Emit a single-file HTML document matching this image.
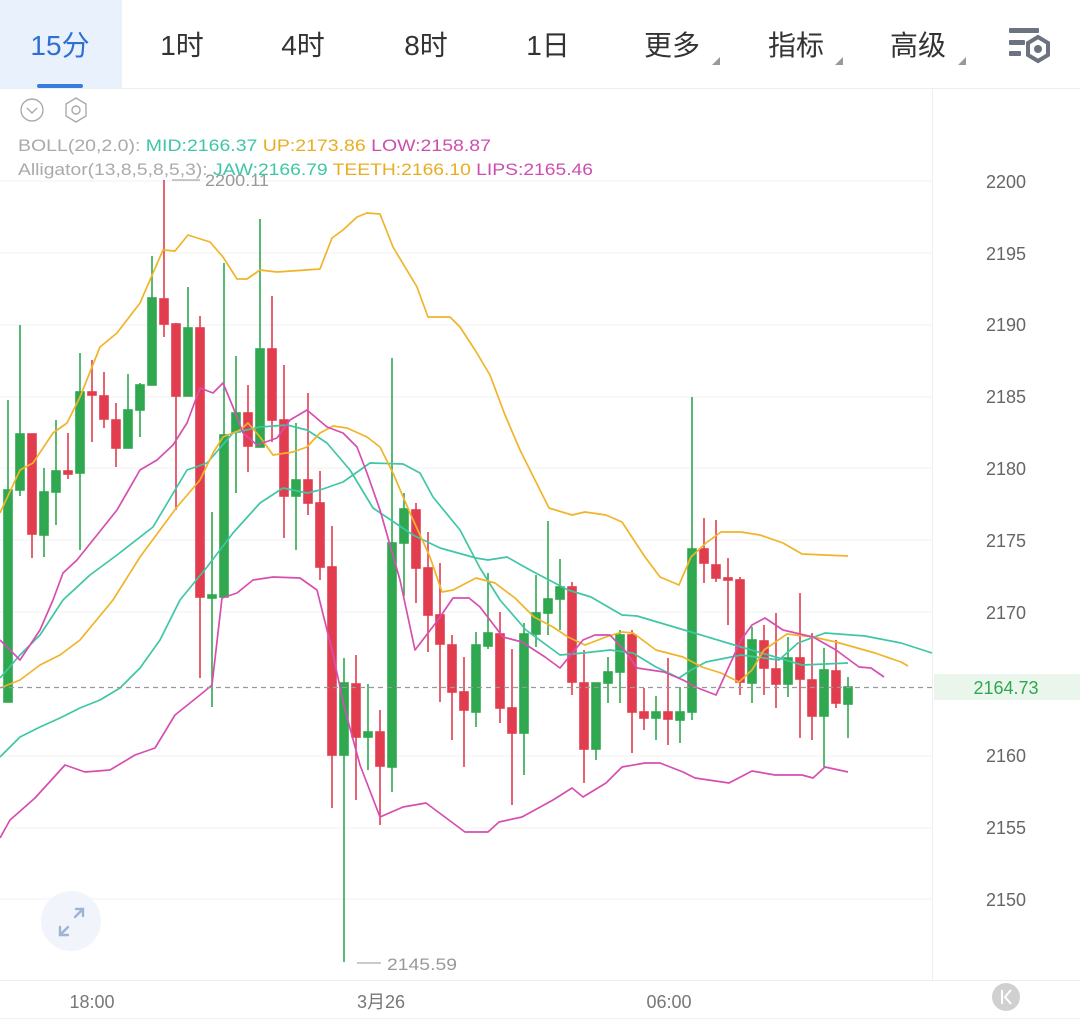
<!DOCTYPE html>
<html><head><meta charset="utf-8"><style>
html,body{margin:0;padding:0;background:#fff;}
svg{display:block;}
text{font-family:"Liberation Sans","Noto Sans CJK SC",sans-serif;}
</style></head><body>
<svg width="1080" height="1022" viewBox="0 0 1080 1022" xmlns="http://www.w3.org/2000/svg">
<rect width="1080" height="1022" fill="#fff"/>
<!-- tabs -->
<rect x="0" y="0" width="122" height="88" fill="#e8f1fc"/>
<rect x="37" y="84" width="46" height="4" rx="2" fill="#3a7be0"/>
<g font-size="28" fill="#333">
<text x="60" y="55" text-anchor="middle" fill="#2f6fd4">15分</text>
<text x="182" y="55" text-anchor="middle">1时</text>
<text x="303" y="55" text-anchor="middle">4时</text>
<text x="426" y="55" text-anchor="middle">8时</text>
<text x="548" y="55" text-anchor="middle">1日</text>
<text x="672" y="55" text-anchor="middle">更多</text>
<text x="796" y="55" text-anchor="middle">指标</text>
<text x="918" y="55" text-anchor="middle">高级</text>
</g>
<g fill="#999">
<polygon points="712,65 720,57 720,65"/>
<polygon points="835,65 843,57 843,65"/>
<polygon points="958,65 966,57 966,65"/>
</g>
<g fill="#6b7280">
<rect x="1009" y="28" width="30" height="5" rx="1"/>
<rect x="1009" y="40" width="16" height="5" rx="1"/>
<rect x="1009" y="51" width="12" height="5" rx="1"/>
<polygon points="1038,37 1048,43 1048,55 1038,61 1028,55 1028,43" fill="none" stroke="#6b7280" stroke-width="4"/>
<circle cx="1038" cy="49" r="4"/>
</g>
<line x1="0" y1="88.5" x2="1080" y2="88.5" stroke="#eee"/>
<!-- grid -->
<g stroke="#f1f1f1" stroke-width="1">
<line x1="0" y1="181" x2="932" y2="181"/><line x1="0" y1="253" x2="932" y2="253"/>
<line x1="0" y1="325" x2="932" y2="325"/><line x1="0" y1="397" x2="932" y2="397"/>
<line x1="0" y1="468" x2="932" y2="468"/><line x1="0" y1="540" x2="932" y2="540"/>
<line x1="0" y1="612" x2="932" y2="612"/><line x1="0" y1="756" x2="932" y2="756"/>
<line x1="0" y1="828" x2="932" y2="828"/><line x1="0" y1="899" x2="932" y2="899"/>
</g>
<line x1="932.5" y1="88" x2="932.5" y2="980" stroke="#eee"/>
<line x1="0" y1="980.5" x2="1080" y2="980.5" stroke="#eee"/>
<line x1="0" y1="1018.5" x2="1080" y2="1018.5" stroke="#f2f2f2"/>
<!-- legend icons -->
<circle cx="32" cy="110" r="11" fill="none" stroke="#aaa" stroke-width="1.4"/>
<polyline points="27,108 32,113 37,108" fill="none" stroke="#aaa" stroke-width="1.4"/>
<polygon points="76,98 86,104 86,116 76,122 66,116 66,104" fill="none" stroke="#aaa" stroke-width="1.4"/>
<circle cx="76" cy="110" r="4" fill="none" stroke="#aaa" stroke-width="1.4"/>
<!-- price axis -->
<g font-size="18" fill="#666" text-anchor="middle">
<text x="1006" y="188">2200</text><text x="1006" y="260">2195</text>
<text x="1006" y="331">2190</text><text x="1006" y="403">2185</text>
<text x="1006" y="475">2180</text><text x="1006" y="547">2175</text>
<text x="1006" y="619">2170</text><text x="1006" y="762">2160</text>
<text x="1006" y="834">2155</text><text x="1006" y="906">2150</text>
</g>
<!-- time axis -->
<g font-size="18" fill="#777" text-anchor="middle">
<text x="92" y="1008">18:00</text><text x="381" y="1008">3月26</text><text x="669" y="1008">06:00</text>
</g>
<circle cx="1006" cy="997" r="14" fill="#d0d0d0"/>
<line x1="1002" y1="990" x2="1002" y2="1004" stroke="#fff" stroke-width="2"/>
<polyline points="1011,990 1005,997 1011,1004" fill="none" stroke="#fff" stroke-width="2"/>
<!-- candles -->
<g stroke-width="1.6">
<g stroke="#2fa84f" fill="#2fa84f">
<line x1="8" y1="400" x2="8" y2="702"/><rect x="4" y="490" width="8" height="212"/>
<line x1="20" y1="325" x2="20" y2="496"/><rect x="16" y="434" width="8" height="56"/>
<line x1="44" y1="468" x2="44" y2="557"/><rect x="40" y="492" width="8" height="43"/>
<line x1="56" y1="420" x2="56" y2="525"/><rect x="52" y="471" width="8" height="21"/>
<line x1="80" y1="353" x2="80" y2="550"/><rect x="76" y="392" width="8" height="81"/>
<line x1="128" y1="374" x2="128" y2="448"/><rect x="124" y="410" width="8" height="38"/>
<line x1="140" y1="383" x2="140" y2="437"/><rect x="136" y="385" width="8" height="25"/>
<line x1="152" y1="256" x2="152" y2="385"/><rect x="148" y="298" width="8" height="87"/>
<line x1="188" y1="287" x2="188" y2="396"/><rect x="184" y="328" width="8" height="68"/>
<line x1="212" y1="512" x2="212" y2="707"/><rect x="208" y="595" width="8" height="3"/>
<line x1="224" y1="263" x2="224" y2="597"/><rect x="220" y="435" width="8" height="162"/>
<line x1="236" y1="356" x2="236" y2="493"/><rect x="232" y="413" width="8" height="19"/>
<line x1="260" y1="219" x2="260" y2="447"/><rect x="256" y="349" width="8" height="98"/>
<line x1="296" y1="423" x2="296" y2="550"/><rect x="292" y="480" width="8" height="16"/>
<line x1="344" y1="658" x2="344" y2="962"/><rect x="340" y="683" width="8" height="72"/>
<line x1="368" y1="684" x2="368" y2="770"/><rect x="364" y="732" width="8" height="5"/>
<line x1="392" y1="358" x2="392" y2="792"/><rect x="388" y="543" width="8" height="224"/>
<line x1="404" y1="493" x2="404" y2="596"/><rect x="400" y="509" width="8" height="34"/>
<line x1="476" y1="632" x2="476" y2="727"/><rect x="472" y="645" width="8" height="67"/>
<line x1="488" y1="573" x2="488" y2="649"/><rect x="484" y="633" width="8" height="13"/>
<line x1="524" y1="623" x2="524" y2="775"/><rect x="520" y="634" width="8" height="99"/>
<line x1="536" y1="575" x2="536" y2="647"/><rect x="532" y="613" width="8" height="21"/>
<line x1="548" y1="521" x2="548" y2="635"/><rect x="544" y="599" width="8" height="14"/>
<line x1="560" y1="559" x2="560" y2="630"/><rect x="556" y="587" width="8" height="12"/>
<line x1="596" y1="683" x2="596" y2="760"/><rect x="592" y="683" width="8" height="66"/>
<line x1="608" y1="657" x2="608" y2="703"/><rect x="604" y="672" width="8" height="11"/>
<line x1="620" y1="630" x2="620" y2="703"/><rect x="616" y="635" width="8" height="37"/>
<line x1="656" y1="696" x2="656" y2="740"/><rect x="652" y="712" width="8" height="6"/>
<line x1="680" y1="687" x2="680" y2="743"/><rect x="676" y="712" width="8" height="8"/>
<line x1="692" y1="397" x2="692" y2="720"/><rect x="688" y="549" width="8" height="163"/>
<line x1="752" y1="627" x2="752" y2="703"/><rect x="748" y="640" width="8" height="43"/>
<line x1="788" y1="637" x2="788" y2="697"/><rect x="784" y="658" width="8" height="26"/>
<line x1="824" y1="648" x2="824" y2="767"/><rect x="820" y="670" width="8" height="46"/>
<line x1="848" y1="677" x2="848" y2="738"/><rect x="844" y="687" width="8" height="17"/>
</g>
<g stroke="#e23d4e" fill="#e23d4e">
<line x1="32" y1="434" x2="32" y2="558"/><rect x="28" y="434" width="8" height="100"/>
<line x1="68" y1="433" x2="68" y2="479"/><rect x="64" y="471" width="8" height="3"/>
<line x1="92" y1="360" x2="92" y2="442"/><rect x="88" y="392" width="8" height="3"/>
<line x1="104" y1="372" x2="104" y2="428"/><rect x="100" y="396" width="8" height="23"/>
<line x1="116" y1="403" x2="116" y2="467"/><rect x="112" y="420" width="8" height="28"/>
<line x1="164" y1="180" x2="164" y2="337"/><rect x="160" y="299" width="8" height="25"/>
<line x1="176" y1="323" x2="176" y2="510"/><rect x="172" y="324" width="8" height="72"/>
<line x1="200" y1="316" x2="200" y2="678"/><rect x="196" y="328" width="8" height="269"/>
<line x1="248" y1="385" x2="248" y2="472"/><rect x="244" y="413" width="8" height="33"/>
<line x1="272" y1="296" x2="272" y2="442"/><rect x="268" y="349" width="8" height="71"/>
<line x1="284" y1="365" x2="284" y2="538"/><rect x="280" y="420" width="8" height="76"/>
<line x1="308" y1="393" x2="308" y2="515"/><rect x="304" y="480" width="8" height="23"/>
<line x1="320" y1="471" x2="320" y2="580"/><rect x="316" y="503" width="8" height="64"/>
<line x1="332" y1="526" x2="332" y2="808"/><rect x="328" y="567" width="8" height="188"/>
<line x1="356" y1="655" x2="356" y2="800"/><rect x="352" y="684" width="8" height="53"/>
<line x1="380" y1="710" x2="380" y2="825"/><rect x="376" y="732" width="8" height="34"/>
<line x1="416" y1="503" x2="416" y2="603"/><rect x="412" y="510" width="8" height="58"/>
<line x1="428" y1="532" x2="428" y2="652"/><rect x="424" y="568" width="8" height="47"/>
<line x1="440" y1="563" x2="440" y2="702"/><rect x="436" y="615" width="8" height="29"/>
<line x1="452" y1="635" x2="452" y2="740"/><rect x="448" y="645" width="8" height="47"/>
<line x1="464" y1="657" x2="464" y2="767"/><rect x="460" y="692" width="8" height="18"/>
<line x1="500" y1="612" x2="500" y2="723"/><rect x="496" y="634" width="8" height="74"/>
<line x1="512" y1="649" x2="512" y2="805"/><rect x="508" y="708" width="8" height="25"/>
<line x1="572" y1="582" x2="572" y2="695"/><rect x="568" y="587" width="8" height="95"/>
<line x1="584" y1="650" x2="584" y2="783"/><rect x="580" y="683" width="8" height="66"/>
<line x1="632" y1="630" x2="632" y2="753"/><rect x="628" y="635" width="8" height="77"/>
<line x1="644" y1="688" x2="644" y2="730"/><rect x="640" y="712" width="8" height="6"/>
<line x1="668" y1="658" x2="668" y2="745"/><rect x="664" y="712" width="8" height="7"/>
<line x1="704" y1="518" x2="704" y2="583"/><rect x="700" y="549" width="8" height="14"/>
<line x1="716" y1="520" x2="716" y2="582"/><rect x="712" y="565" width="8" height="13"/>
<line x1="728" y1="558" x2="728" y2="625"/><rect x="724" y="578" width="8" height="2"/>
<line x1="740" y1="577" x2="740" y2="695"/><rect x="736" y="580" width="8" height="102"/>
<line x1="764" y1="625" x2="764" y2="695"/><rect x="760" y="641" width="8" height="27"/>
<line x1="776" y1="613" x2="776" y2="708"/><rect x="772" y="669" width="8" height="15"/>
<line x1="800" y1="593" x2="800" y2="738"/><rect x="796" y="658" width="8" height="21"/>
<line x1="812" y1="633" x2="812" y2="740"/><rect x="808" y="680" width="8" height="36"/>
<line x1="836" y1="640" x2="836" y2="708"/><rect x="832" y="671" width="8" height="32"/>
</g>
</g>
<!-- indicator lines -->
<g fill="none" stroke-width="1.7" stroke-linejoin="round">
<polyline stroke="#f0b429" points="0,513 20,470 33,463 53,433 67,423 80,397 100,347 117,333 140,303 163,250 175,251 188,235 210,242 223,257 237,279 247,279 260,270 277,272 320,269 332,238 343,230 357,217 367,213 380,214 393,247 417,287 428,317 450,317 460,327 475,350 490,375 505,415 520,450 530,470 549,508 572,515 585,512 606,515 622,522 645,557 660,577 679,585 691,557 706,543 721,532 741,532 760,535 783,543 802,554 848,556"/>
<polyline stroke="#3ec6a6" points="0,678 20,655 40,635 63,600 90,575 117,555 153,527 187,470 207,463 233,433 260,427 287,425 307,430 327,443 350,470 373,508 413,535 440,548 476,558 488,560 507,557 530,570 568,590 591,597 622,615 637,616 691,632 741,647 779,658 802,665 848,663"/>
<polyline stroke="#d64fb0" points="0,838 10,820 35,798 65,765 85,772 110,770 135,755 155,748 175,715 200,695 212,685 222,598 237,593 253,580 273,577 300,578 317,590 332,650 345,710 360,765 380,817 403,807 426,803 465,832 488,832 499,822 522,817 553,800 572,788 583,797 606,783 622,767 645,763 660,763 683,772 695,778 729,783 752,771 775,775 802,775 813,778 825,767 848,772"/>
<polyline stroke="#3ec6a6" points="0,757 20,737 40,727 60,718 80,708 100,700 120,688 140,668 160,640 180,600 207,567 233,533 260,503 283,488 307,493 320,490 343,482 370,463 403,464 420,473 433,497 460,530 480,568 500,600 526,630 560,655 583,653 610,650 633,653 656,667 679,678 691,670 706,662 741,655 779,660 798,643 825,633 865,636 901,643 932,653"/>
<polyline stroke="#f0b429" points="0,688 20,680 40,665 60,655 80,640 113,600 140,557 177,507 200,480 213,453 223,437 240,430 248,423 260,437 273,455 293,452 307,447 320,433 333,426 347,428 367,437 380,447 393,473 410,513 430,557 442,592 453,590 476,578 495,583 515,598 534,617 553,627 568,637 585,645 606,637 622,632 633,633 656,650 683,657 702,667 721,673 739,682 752,670 764,650 787,634 813,637 836,642 875,653 901,662 908,666"/>
<polyline stroke="#d64fb0" points="0,640 20,660 40,630 53,600 63,573 77,560 93,540 117,510 140,470 157,460 173,445 187,423 200,388 213,393 223,383 233,407 243,433 257,445 277,438 290,420 307,410 327,427 343,433 357,447 367,473 380,510 400,580 415,650 438,620 453,598 469,598 480,607 503,637 522,642 545,657 560,668 583,640 595,635 610,635 626,652 637,668 664,672 683,680 698,688 716,695 741,640 752,625 765,618 783,630 813,637 836,650 859,667 871,668 884,677"/>
</g>
<!-- current price -->
<line x1="0" y1="687.5" x2="932" y2="687.5" stroke="#999" stroke-width="1.2" stroke-dasharray="5,4"/>
<rect x="934" y="674" width="146" height="26" fill="#eaf6ec"/>
<text x="1006" y="694" font-size="18" fill="#2fa84f" text-anchor="middle">2164.73</text>
<!-- max/min labels -->
<line x1="172" y1="180" x2="200" y2="180" stroke="#aaa" stroke-width="1.2"/>
<text x="205" y="186" font-size="17" fill="#999" textLength="64" lengthAdjust="spacingAndGlyphs">2200.11</text>
<line x1="357" y1="963" x2="381" y2="963" stroke="#aaa" stroke-width="1.2"/>
<text x="387" y="970" font-size="17" fill="#999" textLength="70" lengthAdjust="spacingAndGlyphs">2145.59</text>
<!-- legend text -->
<rect x="14" y="130" width="485" height="52" fill="#fff" fill-opacity="0"/>
<text x="18" y="151" font-size="17" textLength="473" lengthAdjust="spacingAndGlyphs"><tspan fill="#aaa">BOLL(20,2.0): </tspan><tspan fill="#3ec6a6">MID:2166.37 </tspan><tspan fill="#e8ad22">UP:2173.86 </tspan><tspan fill="#cc4fae">LOW:2158.87</tspan></text>
<text x="18" y="175" font-size="17" textLength="575" lengthAdjust="spacingAndGlyphs"><tspan fill="#aaa">Alligator(13,8,5,8,5,3): </tspan><tspan fill="#3ec6a6">JAW:2166.79 </tspan><tspan fill="#e8ad22">TEETH:2166.10 </tspan><tspan fill="#cc4fae">LIPS:2165.46</tspan></text>
<!-- expand button -->
<circle cx="71" cy="921" r="30" fill="#f1f5fb"/>
<g stroke="#9fb3d6" stroke-width="2.4" fill="none" stroke-linecap="round">
<line x1="60" y1="935" x2="68" y2="927"/><polyline points="60,927 60,935 68,935"/>
<line x1="83" y1="909" x2="75" y2="917"/><polyline points="76,909 83,909 83,916"/>
</g>
</svg>
</body></html>
